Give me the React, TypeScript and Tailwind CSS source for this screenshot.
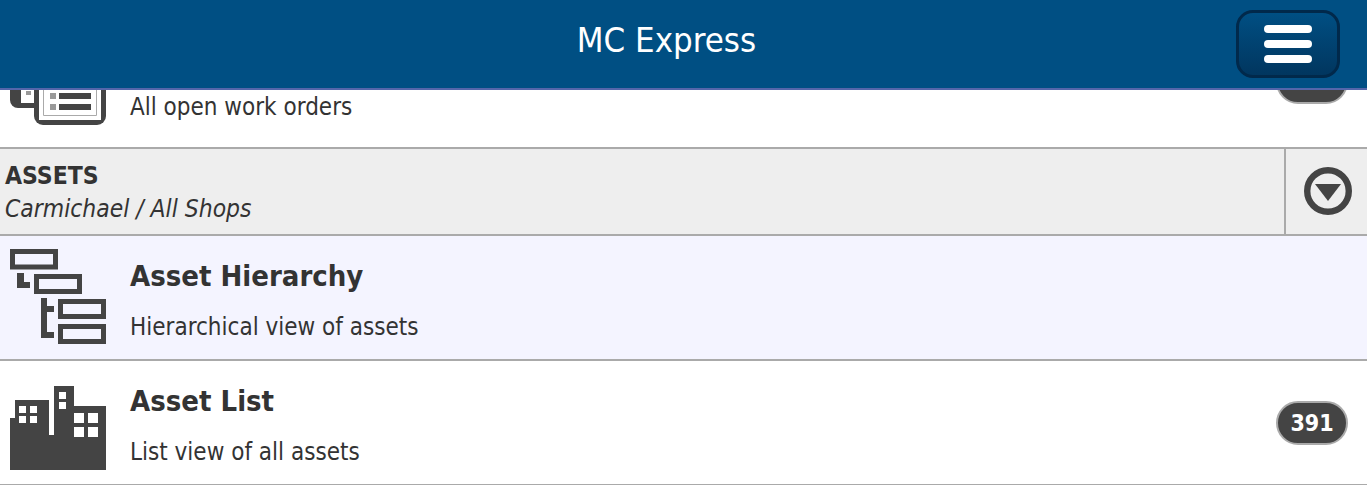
const FONT = "font-['DejaVu_Sans_Condensed','DejaVu_Sans',sans-serif]";

function Hierarchy() {
  return (
    <svg width="96" height="96" viewBox="0 0 96 96" className="block">
      <g fill="none" stroke="#444" strokeWidth="5">
        <rect x="2.5" y="2.5" width="43" height="15.5" />
        <rect x="26.5" y="27.5" width="43" height="15" />
        <rect x="50.5" y="52.5" width="43" height="15" />
        <rect x="50.5" y="77.5" width="43" height="15" />
      </g>
      <path d="M7 24h7v9h6v6H7zM31 49h6v8h7v6h-7v20h7v6H31z" fill="#444" />
    </svg>
  );
}

function Buildings() {
  return (
    <svg width="96" height="96" viewBox="0 0 96 96" className="block">
      <path fill="#444" d="M0 44h5V26h34v35h5V12h20v20h32v64H0z" />
      <g fill="#fff">
        <rect x="9" y="32" width="7" height="7" />
        <rect x="20" y="32" width="7" height="7" />
        <rect x="9" y="42" width="7" height="7" />
        <rect x="20" y="42" width="7" height="7" />
        <rect x="49" y="18" width="7" height="7" />
        <rect x="49" y="28" width="7" height="7" />
        <rect x="64" y="39" width="10" height="10" />
        <rect x="78" y="39" width="10" height="10" />
        <rect x="64" y="53" width="10" height="10" />
        <rect x="78" y="53" width="10" height="10" />
      </g>
    </svg>
  );
}

function OrdersIcon() {
  return (
    <svg width="96" height="96" viewBox="0 0 96 96" className="block">
      <path d="M0 38h24v41H8a8 8 0 0 1-8-8z" fill="#444" />
      <rect x="11" y="38" width="13" height="36" fill="#fff" />
      <rect x="16" y="62" width="5" height="4" fill="#999" />
      <rect x="24" y="28" width="72" height="68" rx="9" fill="#444" />
      <rect x="29" y="38" width="62" height="53" fill="#fff" />
      <path d="M33.5 50v36.5h53V50" fill="none" stroke="#aaa" strokeWidth="1" />
      <rect x="40" y="64" width="6" height="6" fill="#999" />
      <rect x="40" y="75" width="6" height="6" fill="#999" />
      <rect x="49" y="64" width="32" height="6" fill="#444" />
      <rect x="49" y="75" width="32" height="6" fill="#444" />
    </svg>
  );
}

function Row({
  icon,
  title,
  text,
  badge,
  bg = "bg-white",
  badgeOffset = "",
}: {
  icon: React.ReactNode;
  title?: string;
  text: string;
  badge?: string;
  bg?: string;
  badgeOffset?: string;
}) {
  return (
    <div className={`flex h-[123px] items-center pb-px ${bg}`}>
      <div className="flex w-[130px] shrink-0 justify-start pl-[10px]">{icon}</div>
      <div className="flex flex-1 flex-col pt-[9px]">
        <div className="h-[50px] text-[29px] leading-[50px] font-bold text-[#333]">{title}</div>
        <div className="text-[24px] leading-[52px] text-[#333]">{text}</div>
      </div>
      {badge !== undefined && (
        <div className={`mr-[19px] flex h-[44px] w-[72px] items-center justify-center rounded-full border-2 border-[#aaaaaa] bg-[#444] text-[23px] font-bold text-white ${badgeOffset}`}>
          {badge}
        </div>
      )}
    </div>
  );
}

export default function App() {
  return (
    <div className={`h-[485px] overflow-hidden bg-white ${FONT}`}>
      <header className="relative z-10 flex h-[90px] items-center justify-center border-b-2 border-[#5566aa] bg-[#004f83] pr-[34px] pb-[6px]">
        <h1 className="text-[34.5px] font-normal text-white">MC Express</h1>
        <button className="absolute top-[10px] right-[27px] flex h-[68px] w-[104px] flex-col items-center justify-center gap-[7px] rounded-[17px] border-[3px] border-[#01294b] bg-gradient-to-b from-[#004f83] to-[#01365f]">
          <span className="h-[8px] w-[48px] rounded-full bg-white" />
          <span className="h-[8px] w-[48px] rounded-full bg-white" />
          <span className="h-[8px] w-[48px] rounded-full bg-white" />
        </button>
      </header>
      <main className="mt-[-74px]">
        <div className="pb-[8px]">
          <Row icon={<OrdersIcon />} text="All open work orders" badge="" badgeOffset="mt-[10px]" />
        </div>
        <div className="flex h-[89px] items-stretch border-y-2 border-[#aaaaaa] bg-[#eeeeee]">
          <div className="flex flex-1 flex-col justify-center pt-[2px] pl-[5px] text-[#333]">
            <div className="text-[24.5px] leading-[33px] font-bold">ASSETS</div>
            <div className="text-[24.4px] leading-[34px] italic">Carmichael / All Shops</div>
          </div>
          <div className="flex w-[83px] items-center justify-center border-l-2 border-[#aaaaaa] pb-[2px] pl-[2px]">
            <svg width="48" height="48" viewBox="0 0 48 48">
              <circle cx="24" cy="24" r="20.8" fill="none" stroke="#444" strokeWidth="6.4" />
              <path d="M11 17h26L24 34z" fill="#444" />
            </svg>
          </div>
        </div>
        <div className="border-b-2 border-[#aaaaaa]">
          <Row icon={<Hierarchy />} title="Asset Hierarchy" text="Hierarchical view of assets" bg="bg-[#f4f4ff]" />
        </div>
        <div className="border-b-2 border-[#aaaaaa]">
          <Row icon={<Buildings />} title="Asset List" text="List view of all assets" badge="391" badgeOffset="mt-[2px]" />
        </div>
      </main>
    </div>
  );
}
